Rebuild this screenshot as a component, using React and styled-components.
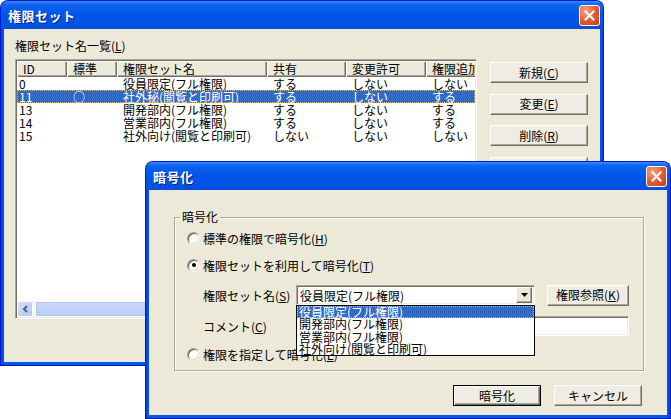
import React from 'react';
import styled, { createGlobalStyle } from 'styled-components';

const GlobalStyle = createGlobalStyle`
    body {
        margin: 0;
        background: #fff;
        font-family: "Noto Sans CJK JP", "Noto Sans", sans-serif;
        font-size: 12px;
        color: #000;
    }
    * { box-sizing: border-box; }
`

const Desktop = styled.div`
    position: relative;
    width: 671px;
    height: 419px;
    overflow: hidden;
    background: #fff;
`

// windows sit on a free desktop, so they are placed by coordinates
const Window = styled.div`
    position: absolute;
    left: ${p => p.$x}px;
    top: ${p => p.$y}px;
    width: ${p => p.$w}px;
    height: ${p => p.$h}px;
    display: flex;
    flex-direction: column;
    background: linear-gradient(to right, #0A3FDB, #0058EE 3px, #0058EE calc(100% - 3px), #0A3FDB);
    border: 1px solid #0019CF;
    border-bottom-color: #001A9C;
    border-radius: 8px 8px 0 0;
    overflow: hidden;
`

const TitleBar = styled.div`
    height: 28px;
    flex: none;
    display: flex;
    align-items: center;
    justify-content: space-between;
    padding: 0 3px 0 7px;
    background: linear-gradient(#3D8DF8 0%, #0F64F0 12%, #0056EA 45%, #0053E4 85%, #0A4CD6 100%);
`

const Title = styled.span`
    color: #fff;
    font-weight: bold;
    font-size: 13px;
    letter-spacing: 0.5px;
    text-shadow: 1px 1px 0 #0A1E8A;
`

const CloseButton = styled.div`
    width: 21px;
    height: 21px;
    border: 1px solid #fff;
    border-radius: 3px;
    display: flex;
    align-items: center;
    justify-content: center;
    background: radial-gradient(circle at 30% 25%, #F3A183, #E2592F 55%, #C43E1A);
`

const Body = styled.div`
    flex: 1;
    margin: 0 3px 3px;
    background: #ECE9D8;
    display: flex;
    flex-direction: ${p => p.$column ? 'column' : 'row'};
    padding: ${p => p.$pad || '0'};
`

const LeftCol = styled.div`
    display: flex;
    flex-direction: column;
    width: 462px;
`

const Label = styled.div`
    line-height: 14px;
    height: 14px;
    margin-bottom: 6px;
    white-space: nowrap;
`

const ListView = styled.div`
    width: 462px;
    height: 260px;
    background: #fff;
    border: 1px solid;
    border-color: #ACA899 #fff #fff #ACA899;
    box-shadow: inset 1px 1px 0 #716F64, inset -1px -1px 0 #F1EFE2;
    padding: 1px;
    display: flex;
    flex-direction: column;
    overflow: hidden;
`

const cols = '50px 50px 150px 79px 80px 90px'

const Header = styled.div`
    display: grid;
    grid-template-columns: ${cols};
    height: 16px;
    flex: none;
    overflow: hidden;
`

const HeadCell = styled.div`
    padding-left: 6px;
    line-height: 16px;
    background: #EBEADB;
    white-space: nowrap;
    overflow: hidden;
    box-shadow: inset 1px 1px 0 #fff, inset -1px -1px 0 #716F64, inset -2px -2px 0 #ACA899;
`

const Rows = styled.div`
    flex: 1;
    overflow: hidden;
`

const Row = styled.div`
    display: grid;
    grid-template-columns: ${cols};
    height: 13px;
    line-height: 13px;
    background: ${p => p.$selected ? '#316AC5' : 'transparent'};
    color: ${p => p.$selected ? '#fff' : '#000'};
    outline: ${p => p.$selected ? '1px dotted #D8C070' : 'none'};
    outline-offset: -1px;
`

const Cell = styled.div`
    padding-left: ${p => p.$first ? 2 : 6}px;
    white-space: nowrap;
    overflow-x: clip;
`

const HScroll = styled.div`
    height: 16px;
    flex: none;
    display: flex;
    gap: 2px;
    background: #F4F3EE;
`

const ScrollArrow = styled.div`
    width: 16px;
    height: 16px;
    border: 1px solid #fff;
    border-radius: 2px;
    background: linear-gradient(135deg, #D2DEFC, #B4C8F6);
    display: flex;
    align-items: center;
    justify-content: center;
`

const Thumb = styled.div`
    flex: 1;
    border: 1px solid #fff;
    border-radius: 2px;
    background: linear-gradient(#CBD9FC, #B9CCF8);
    box-shadow: inset 0 0 0 1px #B0C4F2;
`

const RightCol = styled.div`
    display: flex;
    flex-direction: column;
    gap: 10.5px;
    padding-top: 23px;
    margin-left: 13px;
`

const Button = styled.div`
    width: ${p => p.$w}px;
    height: 21px;
    flex: none;
    display: flex;
    align-items: center;
    justify-content: center;
    background: #EFEDE3;
    border: 1px solid;
    border-color: ${p => p.$default ? '#000' : '#fff #716F64 #716F64 #fff'};
    box-shadow: ${p => p.$default
        ? 'inset 1px 1px 0 #fff, inset -1px -1px 0 #716F64, inset -2px -2px 0 #ACA899'
        : 'inset -1px -1px 0 #ACA899'};
    white-space: nowrap;
    line-height: 14px;
`

const GroupBox = styled.div`
    position: relative;
    margin: 27px 23px 0 25px;
    height: 154px;
    border: 1px solid #ACA899;
    box-shadow: inset 1px 1px 0 #fff, 1px 1px 0 #fff;
    padding: 10px 0 0 12px;
    display: flex;
    flex-direction: column;
`

// caption sits over the group frame line
const Legend = styled.span`
    position: absolute;
    top: -8px;
    left: 5px;
    padding: 0 2px;
    line-height: 14px;
    background: #ECE9D8;
`

const RadioRow = styled.div`
    display: flex;
    align-items: center;
    gap: 3px;
    height: 20px;
    margin-top: ${p => p.$gap || 0}px;
    white-space: nowrap;
`

const RadioDot = styled.span`
    position: relative;
    width: 13px;
    height: 13px;
    flex: none;
    border-radius: 50%;
    background: #fff;
    border: 1px solid;
    border-color: #9D9A8E #F4F3EE #F4F3EE #9D9A8E;
    box-shadow: inset 1px 1px 0 #5E5C52, inset -1px -1px 0 #DCDAD0;
    &::after {
        content: '';
        display: ${p => p.$checked ? 'block' : 'none'};
        position: absolute;
        left: 3.5px;
        top: 3.5px;
        width: 4px;
        height: 4px;
        border-radius: 50%;
        background: #000;
    }
`

const FieldRow = styled.div`
    display: flex;
    align-items: center;
    height: 20px;
    margin-top: ${p => p.$gap || 0}px;
    padding-left: 16px;
`

const FieldLabel = styled.div`
    width: 93px;
    white-space: nowrap;
`

const ComboWrap = styled.div`
    position: relative;
    width: 239px;
    height: 20px;
`

const Sunken = styled.div`
    width: ${p => p.$w ? p.$w + 'px' : '100%'};
    height: 20px;
    background: #fff;
    border: 1px solid;
    border-color: #ACA899 #fff #fff #ACA899;
    box-shadow: inset 1px 1px 0 #716F64, inset -1px -1px 0 #F1EFE2;
    display: flex;
    align-items: center;
    padding: 0 2px 0 3px;
    white-space: nowrap;
`

const DropButton = styled.div`
    margin-left: auto;
    width: 16px;
    height: 16px;
    background: #ECE9D8;
    border: 1px solid;
    border-color: #fff #716F64 #716F64 #fff;
    box-shadow: inset -1px -1px 0 #ACA899;
    display: flex;
    align-items: center;
    justify-content: center;
`

const DropList = styled.div`
    position: absolute;
    top: 100%;
    left: 0;
    width: 239px;
    background: #fff;
    border: 1px solid #000;
    z-index: 2;
`

const DropItem = styled.div`
    height: 12.25px;
    line-height: 12.25px;
    padding-left: 2px;
    white-space: nowrap;
    background: ${p => p.$selected ? '#316AC5' : 'transparent'};
    color: ${p => p.$selected ? '#fff' : '#000'};
    outline: ${p => p.$selected ? '1px dotted #D8C070' : 'none'};
    outline-offset: -1px;
`

const ButtonRow = styled.div`
    display: flex;
    justify-content: flex-end;
    gap: 13px;
    margin: 14px 25px 0 0;
`

const Spacer = styled.div`
    width: ${p => p.$w}px;
    flex: none;
`

function Close() {
    return (
        <CloseButton>
            <svg width="11" height="11" viewBox="0 0 11 11">
                <path d="M1.5 1.5 L9.5 9.5 M9.5 1.5 L1.5 9.5" stroke="#fff" strokeWidth="2" strokeLinecap="square" />
            </svg>
        </CloseButton>
    )
}

const sets = [
    ['0', '', '役員限定(フル権限)', 'する', 'しない', 'しない'],
    ['11', '○', '社外秘(閲覧と印刷可)', 'する', 'しない', 'する'],
    ['13', '', '開発部内(フル権限)', 'する', 'しない', 'する'],
    ['14', '', '営業部内(フル権限)', 'する', 'しない', 'する'],
    ['15', '', '社外向け(閲覧と印刷可)', 'しない', 'しない', 'しない'],
]

const options = ['役員限定(フル権限)', '開発部内(フル権限)', '営業部内(フル権限)', '社外向け(閲覧と印刷可)']

export default function App() {
    return (
        <Desktop>
            <GlobalStyle />
            <Window $x={0} $y={0} $w={604} $h={366}>
                <TitleBar>
                    <Title>権限セット</Title>
                    <Close />
                </TitleBar>
                <Body $pad="10px 0 0 11px">
                    <LeftCol>
                        <Label>権限セット名一覧(<u>L</u>)</Label>
                        <ListView>
                            <Header>
                                {['ID', '標準', '権限セット名', '共有', '変更許可', '権限追加'].map(h => (
                                    <HeadCell key={h}>{h}</HeadCell>
                                ))}
                            </Header>
                            <Rows>
                                {sets.map((r, i) => (
                                    <Row key={r[0]} $selected={i === 1}>
                                        {r.map((c, j) => <Cell key={j} $first={j === 0}>{c}</Cell>)}
                                    </Row>
                                ))}
                            </Rows>
                            <HScroll>
                                <ScrollArrow>
                                    <svg width="7" height="8" viewBox="0 0 7 8">
                                        <path d="M5 1 L2 4 L5 7" stroke="#4D6185" strokeWidth="2" fill="none" />
                                    </svg>
                                </ScrollArrow>
                                <Thumb />
                                <ScrollArrow>
                                    <svg width="7" height="8" viewBox="0 0 7 8">
                                        <path d="M2 1 L5 4 L2 7" stroke="#4D6185" strokeWidth="2" fill="none" />
                                    </svg>
                                </ScrollArrow>
                            </HScroll>
                        </ListView>
                    </LeftCol>
                    <RightCol>
                        <Button $w={98}>新規(<u>C</u>)</Button>
                        <Button $w={98}>変更(<u>E</u>)</Button>
                        <Button $w={98}>削除(<u>R</u>)</Button>
                        <Button $w={98}>複製(<u>P</u>)</Button>
                    </RightCol>
                </Body>
            </Window>

            <Window $x={145} $y={161} $w={526} $h={258}>
                <TitleBar>
                    <Title>暗号化</Title>
                    <Close />
                </TitleBar>
                <Body $column>
                    <GroupBox>
                        <Legend>暗号化</Legend>
                        <RadioRow>
                            <RadioDot />
                            <span>標準の権限で暗号化(<u>H</u>)</span>
                        </RadioRow>
                        <RadioRow $gap={7}>
                            <RadioDot $checked />
                            <span>権限セットを利用して暗号化(<u>T</u>)</span>
                        </RadioRow>
                        <FieldRow $gap={10}>
                            <FieldLabel>権限セット名(<u>S</u>)</FieldLabel>
                            <ComboWrap>
                                <Sunken>
                                    役員限定(フル権限)
                                    <DropButton>
                                        <svg width="7" height="4" viewBox="0 0 7 4">
                                            <path d="M0 0 H7 L3.5 4 Z" fill="#000" />
                                        </svg>
                                    </DropButton>
                                </Sunken>
                                <DropList>
                                    {options.map((o, i) => (
                                        <DropItem key={o} $selected={i === 0}>{o}</DropItem>
                                    ))}
                                </DropList>
                            </ComboWrap>
                            <Spacer $w={12} />
                            <Button $w={82}>権限参照(<u>K</u>)</Button>
                        </FieldRow>
                        <FieldRow $gap={11}>
                            <FieldLabel>コメント(<u>C</u>)</FieldLabel>
                            <Sunken $w={333} />
                        </FieldRow>
                        <RadioRow $gap={8}>
                            <RadioDot />
                            <span>権限を指定して暗号化(<u>E</u>)</span>
                        </RadioRow>
                    </GroupBox>
                    <ButtonRow>
                        <Button $w={88} $default>暗号化</Button>
                        <Button $w={88}>キャンセル</Button>
                    </ButtonRow>
                </Body>
            </Window>
        </Desktop>
    )
}
